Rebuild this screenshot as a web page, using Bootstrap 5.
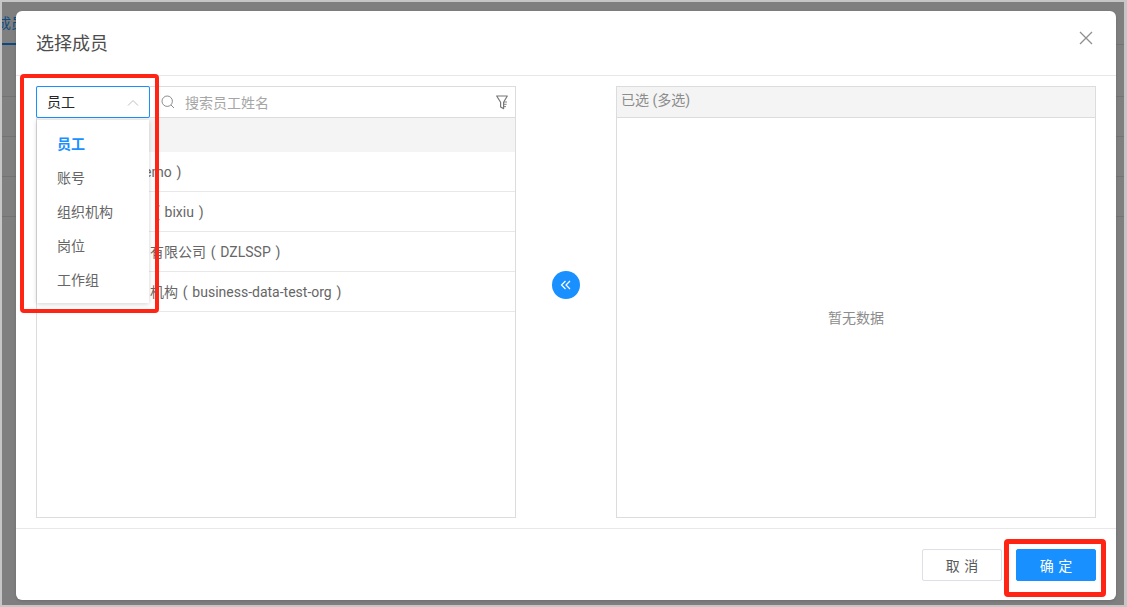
<!DOCTYPE html>
<html lang="zh"><head><meta charset="utf-8">
<link href="https://cdn.jsdelivr.net/npm/bootstrap@5.3.0/dist/css/bootstrap.min.css" rel="stylesheet">
<style>
html,body{margin:0;height:607px;overflow:hidden;background:#c6c6c6}
body{font-family:Roboto,"Noto Sans CJK SC",sans-serif;font-size:14px;color:#595959}
.shot-frame{position:relative;margin:2px 3px 2px 2px;height:603px;background:#7f7f7f;padding:9px 8px 5px 14px;overflow:hidden}
.bg-tab{position:absolute;left:-5px;top:11px;color:#0f4c80;font-size:14px;white-space:nowrap;line-height:20px}
.bg-tabline{position:absolute;left:0;top:41px;width:14px;height:2px;background:#0d4a80}
.bg-rule{position:absolute;left:0;right:0;height:1px;background:#737373}
.r1{top:94px}.r2{top:134px}.r3{top:174px}.r4{top:214px}.r0{top:42px;left:1114px}
.dlg{height:589px;width:1100px;background:#fff;border-radius:6px;position:relative;z-index:1;display:flex;flex-direction:column;box-shadow:0 1px 3px rgba(0,0,0,.15)}
.dlg-head{height:65px;border-bottom:1px solid #e8e8e8;padding:0 20px;display:flex;align-items:center;justify-content:space-between}
.dlg-title{font-size:18px;color:#4d4d4d;line-height:26px;margin-top:1px}
.dlg-x{background:none;border:0;padding:0;width:16px;height:16px;display:block;margin-top:-11px;margin-right:2px;line-height:0}
.dlg-main{flex:1;padding:10px 20px;display:flex;min-height:0}
.pane{width:480px;height:432px;border:1px solid #dcdcdc;display:flex;flex-direction:column;flex:none}
.pane-top{height:31px;display:flex;align-items:center;border-bottom:1px solid #dcdcdc;flex:none}
.sel-spacer{width:113px;flex:none}
.search-ico{margin-left:11px;flex:none}
.search-txt{margin-left:10px;color:#a6a6a6;font-size:14px;flex:1;line-height:20px;padding-top:1px}
.filter-ico{margin-right:7px;flex:none}
.group-row{height:34px;background:#f4f4f4;flex:none}
.mem-row{height:40px;border-bottom:1px solid #e8e8e8;color:#666;font-size:14px;line-height:40px;flex:none;white-space:nowrap;overflow:hidden;word-spacing:1.3px}
.mem-row span{display:block}
.in-a{margin-left:107px}.in-b{margin-left:118px}.in-c{margin-left:113px}
.mid-col{width:100px;flex:none;display:flex;align-items:center;justify-content:center}
.round-btn{width:28px;height:28px;border-radius:50%;background:#1890ff;border:0;padding:0;display:flex;align-items:center;justify-content:center;margin-top:-34px}
.pane-head2{height:31px;background:#f4f4f4;border-bottom:1px solid #dcdcdc;padding-left:4px;color:#8c8c8c;font-size:14px;line-height:27px;flex:none}
.empty-box{flex:1;display:flex;align-items:center;justify-content:center;color:#8c8c8c;font-size:14px;padding-top:2px}
.dlg-foot{height:72px;border-top:1px solid #e8e8e8;padding:20px 20px 0;display:flex;justify-content:flex-end;gap:14px;align-items:flex-start}
.foot-btn{width:80px;height:32px;font-size:14px;padding:1px 0 0;border-radius:2px;line-height:30px;word-spacing:1px}
.foot-cancel{background:#fff;border:1px solid #dcdfe6;color:#595959}
.foot-ok{background:#1890ff;border:1px solid #1890ff;color:#fff}
.sel-box{position:absolute;left:34px;top:84px;width:114px;height:32px;border:1px solid #1890ff;border-radius:2px;background:#fff;display:flex;align-items:center;justify-content:space-between;padding:1px 10px 0 10px;color:#262626;z-index:3;font-size:14px}
.sel-menu{position:absolute;left:35px;top:118px;width:112px;height:183px;background:#fff;box-shadow:0 1px 5px rgba(0,0,0,.18);padding:7px 0;z-index:3}
.sel-item{height:34px;line-height:34px;padding-left:20px;color:#666;font-size:14px}
.sel-item.on{color:#1890ff;font-weight:700}
.callout{position:absolute;border:4px solid #ff2414;border-radius:4px;z-index:4;pointer-events:none}
.callout-a{left:18px;top:72px;width:139px;height:239px}
.callout-b{left:1002px;top:537px;width:102px;height:58px;border-width:5px}
</style></head>
<body>
<div class="shot-frame">
  <div class="bg-tab">成员</div><div class="bg-tabline"></div>
  <div class="bg-rule r1"></div><div class="bg-rule r2"></div><div class="bg-rule r3"></div><div class="bg-rule r4"></div><div class="bg-rule r0"></div>
  <div class="dlg">
    <div class="dlg-head">
      <div class="dlg-title">选择成员</div>
      <button class="dlg-x" aria-label="关闭"><svg width="16" height="16" viewBox="0 0 16 16"><path d="M2 2L14 14M14 2L2 14" stroke="#8f8f8f" stroke-width="1.3" fill="none"/></svg></button>
    </div>
    <div class="dlg-main">
      <div class="pane">
        <div class="pane-top">
          <div class="sel-spacer"></div>
          <svg class="search-ico" width="14" height="14" viewBox="0 0 14 14"><circle cx="6.2" cy="6.2" r="5.2" stroke="#8c8c8c" fill="none"/><path d="M10 10l3 3" stroke="#8c8c8c" fill="none"/></svg>
          <div class="search-txt">搜索员工姓名</div>
          <svg class="filter-ico" width="12" height="15" viewBox="0 0 12 15"><path d="M.7 1h10.6L7.6 7.2V13.6L4.6 12V7.2z" stroke="#777" stroke-width="1.2" fill="none" stroke-linejoin="round"/><path d="M8 7h3M8 9.3h2.6M8 11.6h2" stroke="#777" stroke-width=".9" fill="none"/></svg>
        </div>
        <div class="group-row"></div>
        <div class="mem-row"><span class="in-a">emo )</span></div>
        <div class="mem-row"><span class="in-b">( bixiu )</span></div>
        <div class="mem-row"><span class="in-c">有限公司 ( DZLSSP )</span></div>
        <div class="mem-row"><span class="in-c">机构 ( business-data-test-org )</span></div>
      </div>
      <div class="mid-col">
        <button class="round-btn" aria-label="添加"><svg width="12" height="12" viewBox="0 0 12 12"><path d="M5.5 2L1.5 6l4 4M10 2L6 6l4 4" stroke="#fff" stroke-width="1.2" fill="none"/></svg></button>
      </div>
      <div class="pane">
        <div class="pane-head2">已选 (多选)</div>
        <div class="empty-box">暂无数据</div>
      </div>
    </div>
    <div class="dlg-foot">
      <button class="btn foot-btn foot-cancel">取 消</button>
      <button class="btn foot-btn foot-ok">确 定</button>
    </div>
  </div>
  <div class="sel-box"><span>员工</span><svg width="12" height="8" viewBox="0 0 12 8"><path d="M1 6.5L6 1.5l5 5" stroke="#bfbfbf" fill="none"/></svg></div>
  <div class="sel-menu">
    <div class="sel-item on">员工</div><div class="sel-item">账号</div><div class="sel-item">组织机构</div><div class="sel-item">岗位</div><div class="sel-item">工作组</div>
  </div>
  <div class="callout callout-a"></div>
  <div class="callout callout-b"></div>
</div>
<script src="https://cdn.jsdelivr.net/npm/bootstrap@5.3.0/dist/js/bootstrap.bundle.min.js"></script>
</body></html>
